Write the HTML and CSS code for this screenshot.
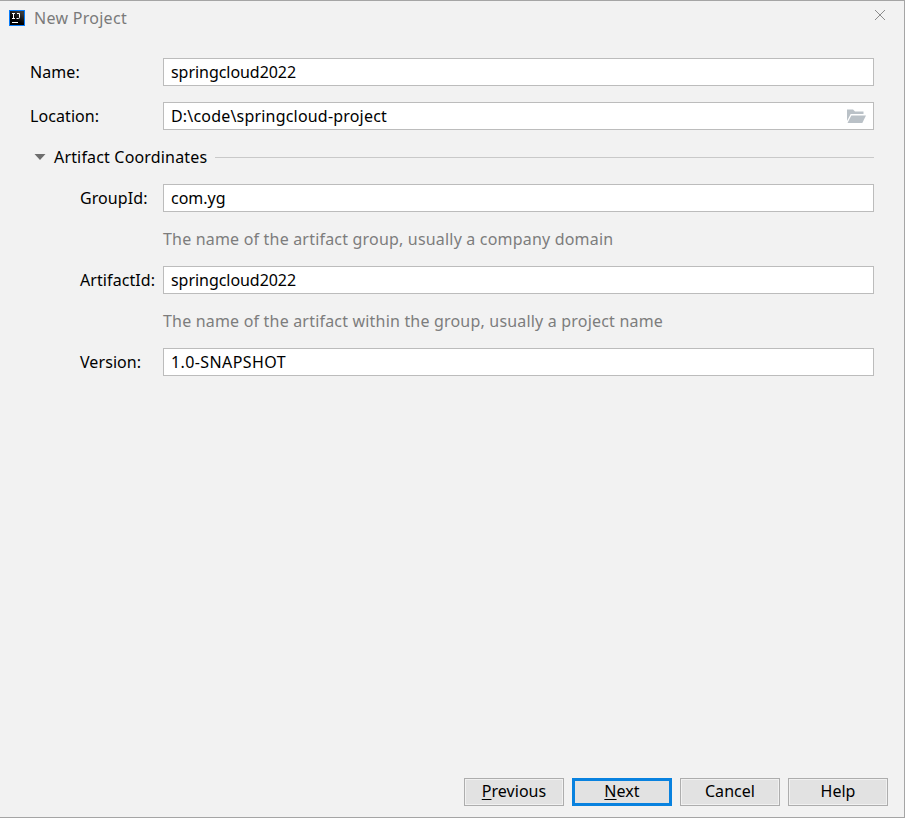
FILE: index.html
```html
<!DOCTYPE html>
<html lang="en">
<head>
<meta charset="utf-8">
<title>New Project</title>
<link rel="stylesheet" href="styles.css">
</head>
<body>
<main class="dialog">
  <header class="titlebar">
    <svg class="logo" width="16" height="16" viewBox="0 0 16 16">
      <defs><linearGradient id="tile" x1="0" y1="1" x2="0.600" y2="0"><stop offset="0.450" stop-color="#000"/><stop offset="1" stop-color="#3a3a3a"/></linearGradient></defs>
      <rect width="16" height="16" fill="#087cfa"/>
      <rect x="1" y="1" width="14" height="14" fill="url(#tile)"/>
      <path d="M3 3.500h3M4.500 3.500v5M3 8.500h3M8 3.500h2.500v4q0 1-1 1H7.500" fill="none" stroke="#fff" stroke-width="1"/>
      <rect x="3" y="12" width="6" height="1" fill="#fff"/>
    </svg>
    <h1 class="title">New Project</h1>
    <svg class="close" width="12" height="12" viewBox="0 0 12 12"><path d="M1 1l10 10M11 1L1 11" stroke="#8c8c8c" stroke-width="1"/></svg>
  </header>
  <form class="form">
    <div class="row"><label class="label">Name:</label><div class="field"><span class="project-name">springcloud2022</span></div></div>
    <div class="row row-location"><label class="label">Location:</label><div class="field"><span class="path">D:\code\springcloud-project</span>
      <svg class="folder" width="20" height="16" viewBox="0 0 20 16"><path d="M1 1.500h6l2 2h8.500v2.500H4.700L1 13z" fill="#bac1c7"/><path d="M5.300 7.500H20L16.300 15H1.500z" fill="#bac1c7"/></svg></div></div>
    <div class="section">
      <svg class="arrow" width="12" height="8" viewBox="0 0 12 8"><path d="M0.500 1h11L6 7z" fill="#6e6e6e"/></svg>
      <span class="section-title">Artifact Coordinates</span><span class="rule"></span>
    </div>
    <div class="row nested"><label class="label">GroupId:</label><div class="field"><span>com.yg</span></div></div>
    <p class="hint">The name of the artifact group, usually a company domain</p>
    <div class="row nested"><label class="label">ArtifactId:</label><div class="field"><span class="project-name">springcloud2022</span></div></div>
    <p class="hint">The name of the artifact within the group, usually a project name</p>
    <div class="row nested"><label class="label">Version:</label><div class="field"><span class="version">1.0-SNAPSHOT</span></div></div>
  </form>
  <footer class="actions">
    <button class="btn"><span><u>P</u>revious</span></button>
    <button class="btn primary"><span><u>N</u>ext</span></button>
    <button class="btn"><span>Cancel</span></button>
    <button class="btn"><span>Help</span></button>
  </footer>
</main>
</body>
</html>
```
FILE: styles.css
```css
* { box-sizing: border-box; }
body { margin: 0; font: 16px/24px "Noto Sans", "Open Sans", sans-serif; color: #000; }
.dialog { width: 905px; height: 818px; background: #f2f2f2; border: 1px solid #a5a5a5; border-left: 0; display: flex; flex-direction: column; }
.titlebar { height: 57px; padding: 5px 18px 0 9px; display: flex; align-items: flex-start; }
.logo { margin: 4px 9px 0 0; }
.title { margin: 0; font-size: 16px; font-weight: 400; letter-spacing: 0.28px; color: #7a7a7a; flex: 1; }
.close { margin-top: 3px; }
.form { padding: 0 30px; flex: 1; }
.row { display: grid; grid-template-columns: 133px 711px; height: 28px; align-items: center; white-space: nowrap; }
.row-location { margin-top: 16px; }
.nested { padding-left: 50px; grid-template-columns: 83px 711px; }
.label { letter-spacing: 0.08px; }
.field { height: 28px; background: #fff; border: 1px solid #bcbcbc; padding: 0 7px; display: flex; align-items: center; justify-content: space-between; }
.project-name { letter-spacing: -0.05px; }
.path { letter-spacing: 0.19px; }
.version { letter-spacing: 0.4px; }
.section { height: 54px; padding-left: 4px; display: flex; align-items: center; width: 844px; }
.section-title { margin: 0 8px; letter-spacing: 0.17px; white-space: nowrap; }
.rule { flex: 1; height: 1px; background: #c9c9c9; }
.hint { margin: 0 0 0 133px; height: 54px; line-height: 54px; letter-spacing: 0.19px; color: #7d7d7d; white-space: nowrap; }
.actions { display: flex; justify-content: flex-end; gap: 8px; padding: 0 16px 11px 0; }
.btn { width: 100px; height: 28px; padding: 0 0 2px; font: inherit; letter-spacing: 0.04px; color: #000; background: #e2e2e2; border: 1px solid #adadad; box-shadow: inset 0 0 0 1px #f1f1f1; display: flex; align-items: center; justify-content: center; }
.primary { border: 3px solid #0982df; box-shadow: none; }
u { text-underline-offset: 2px; text-decoration-thickness: 1px; }
```
